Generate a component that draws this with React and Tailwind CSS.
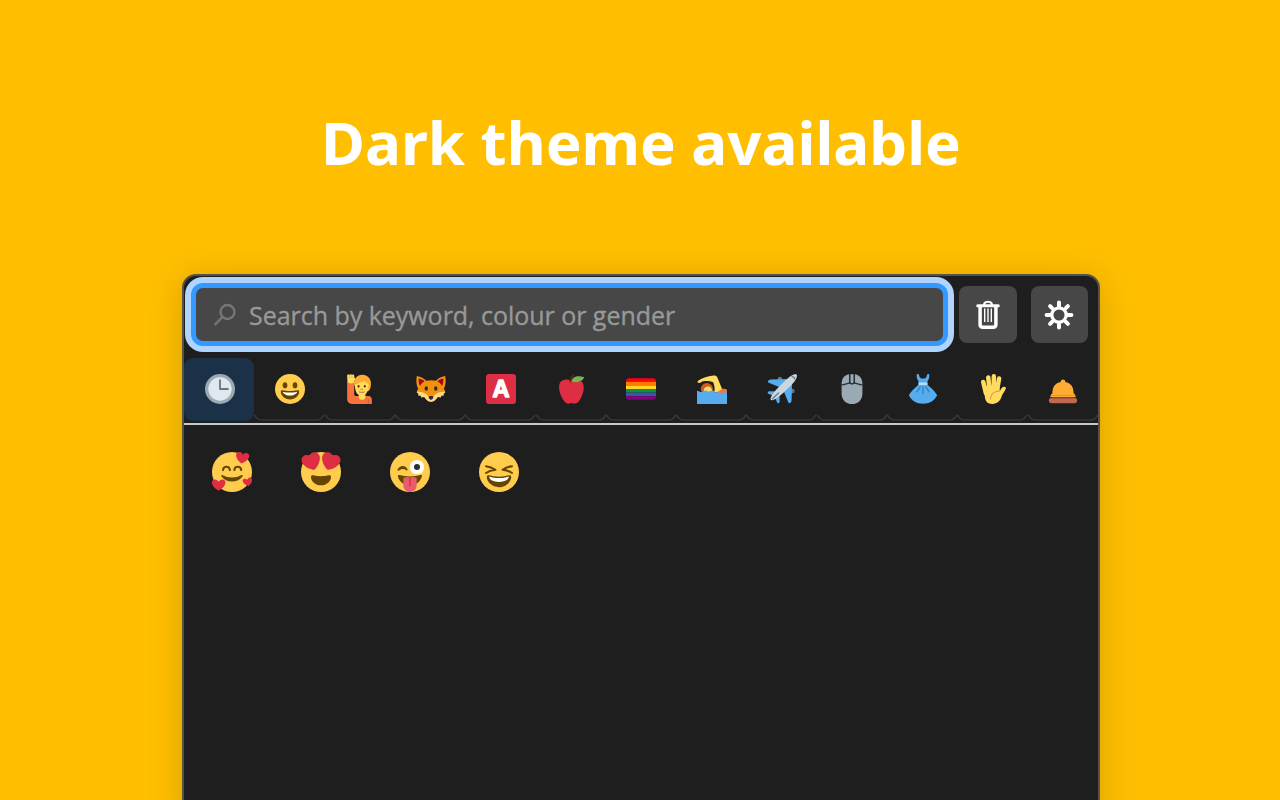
import React from 'react';

const Emoji = ({ size = 'w-[30px] h-[30px]', children }) => (
  <svg viewBox="0 0 36 36" className={`${size} block shrink-0`} fill="none">{children}</svg>
);

const Face = () => <circle cx="18" cy="18" r="18" fill="#FFCC4D" />;
const Heart = ({ t }) => (
  <path transform={t} fill="#DD2E44" d="M0 10C-4.500 7.500-6.500 4.500-6 1.700-5.500-.8-2-1.300 0 1.700 2-1.300 5.500-.8 6 1.700 6.500 4.500 4.500 7.500 0 10z" />
);

const Clock = () => (
  <Emoji>
    <circle cx="18" cy="18" r="18" fill="#99AAB5" />
    <circle cx="18" cy="18" r="14" fill="#E1E8ED" />
    <path d="M18 7.500V18h9.500" stroke="#66757F" strokeWidth="2.200" strokeLinecap="round" strokeLinejoin="round" />
  </Emoji>
);
const Grin = () => (
  <Emoji>
    <Face />
    <ellipse cx="12" cy="13.500" rx="2.800" ry="3.700" fill="#664500" />
    <ellipse cx="24" cy="13.500" rx="2.800" ry="3.700" fill="#664500" />
    <path fill="#664500" d="M18 20.500c-3.623 0-6.027-.422-9-1-.679-.131-2 0-2 2 0 4 4.595 9 11 9 6.404 0 11-5 11-9 0-2-1.321-2.132-2-2-2.973.578-5.377 1-9 1z" />
    <path fill="#FFF" d="M9 21.200s3 1 9 1 9-1 9-1-2 4.600-9 4.600-9-4.600-9-4.600z" />
  </Emoji>
);
const Person = () => (
  <Emoji>
    <path fill="#F4743B" d="M2.600 9.500h8.400V24c0 1.800.8 2.500 2.500 2.500h3l4 2.500 4-2.500H28c2.800 0 4.200 1.600 4.200 4.500V36H8.500C4.800 36 2.600 33.500 2.600 29.500z" />
    <path fill="#FFDC5D" d="M16.500 22h8v5.500c0 2-1.500 3.500-4 3.500s-4-1.500-4-3.500z" />
    <path fill="#FFDC5D" d="M2.500 2C2.500.6 4.400.3 5.200 1 6 .2 7.800.2 8.400 1c.7-.6 2.500-.4 2.700 1l.2 2.500c1.500.2 1.400 2 .5 3L10.500 10.500c-2 1.300-6 1-7.500-.5z" />
    <path stroke="#EF9645" strokeWidth=".7" d="M5.200 1.200v3.600M8.300 1.200v3.600" />
    <path fill="#FFAC33" d="M11 13C10 6.500 14 .8 21 .8S32.300 7 31 14c-.4 3-1.400 5-2.600 6.300L13 18z" />
    <path fill="#FFDC5D" d="M12 12.500c3-.5 4.500-2.200 7-2.700 2-.4 3.500-.8 4.500-1.500 1 2 2.500 3 4.800 3.400.6 7.300-1.800 14-8.300 14-5.500 0-8.300-4.700-8-13.200z" />
    <ellipse cx="16.300" cy="14.800" rx="1.200" ry="1.500" fill="#662113" />
    <ellipse cx="23.800" cy="14.800" rx="1.200" ry="1.500" fill="#662113" />
    <path stroke="#C1694F" strokeLinecap="round" strokeWidth="1.200" d="M19.200 18.300h1.800M17.200 21.600q3 1.200 6 0" />
    <path stroke="#BD4B27" strokeWidth=".8" d="M28 30.500V36" />
  </Emoji>
);
const Fox = () => (
  <Emoji>
    <path fill="#F4900C" d="M1 2.500C-.2 8.500.5 14 2.600 17.500c-.9 1.700-1.500 3-1.900 4.500L14 30h8l13.300-8c-.4-1.500-1-2.800-1.900-4.500C35.500 14 36.200 8.500 35 2.500c-4.800.8-9 3-11.300 5.700-3.700-1-7.700-1-11.400 0C10 5.500 5.800 3.300 1 2.500z" />
    <path fill="#A0041E" d="M3.300 5.300c-.3 3.900.3 7 1.600 9.200 1-2.500 3-4.500 5.400-5.800C8.500 7 6.300 5.900 3.300 5.300zM32.700 5.300c.3 3.900-.3 7-1.600 9.200-1-2.500-3-4.500-5.400-5.800 1.800-1.700 4-2.800 7-3.400z" />
    <path fill="#FFD983" d="M.7 21.500c4-.8 8 .3 10.800 2.300 1.800 1.300 2.700 2.600 4 3.500h5c1.300-.9 2.200-2.200 4-3.500 2.800-2 6.800-3.100 10.800-2.300l-2.100 2.300.3 2-3 .4-.8 1.900-3.500-.4c-2.500 3.300-4.200 5.800-8.200 5.800S12.300 31 9.800 27.700l-3.500.4-.8-1.900-3-.4.3-2z" />
    <path fill="#292F33" d="M15.200 27c1.400-.8 4.200-.8 5.600 0 .2 2-1.300 3.800-2.800 3.800S15 29 15.200 27z" />
    <ellipse cx="12.300" cy="17.500" rx="2" ry="2.700" fill="#292F33" />
    <ellipse cx="23.700" cy="17.500" rx="2" ry="2.700" fill="#292F33" />
  </Emoji>
);
const LetterA = () => (
  <Emoji>
    <rect width="36" height="36" rx="4" fill="#DD2E44" />
    <text x="18" y="28" textAnchor="middle" fontSize="28" fontWeight="600" fill="#FFF" stroke="#FFF" strokeWidth="1.700" strokeLinejoin="round" className="font-['Inter',sans-serif]">A</text>
  </Emoji>
);
const Apple = () => (
  <Emoji>
    <path fill="#DD2E44" d="M18.500 8.500C14 5.500 8 6 5.200 10 2 15 4.300 24 8 30c3 5 5.500 6.500 9.700 5 .6-.2 1.200-.2 1.800 0 4.500 1.500 7.300-.5 9.800-5C33 23 34.800 15 31.700 10.300 28.500 6 23 5.500 18.500 8.500z" />
    <path stroke="#662113" strokeWidth="2.400" strokeLinecap="round" d="M17.500 9C17.500 6 18.800 3.500 20.500 1.800" />
    <path fill="#77B255" d="M18.500 9c1-6 8-8 15.500-5C32 9 25 11 18.500 9z" />
  </Emoji>
);
const Flag = () => (
  <Emoji>
    <path fill="#FF000E" d="M4 5h28a4 4 0 0 1 4 4v.4H0V9a4 4 0 0 1 4-4z" />
    <path fill="#FF7A00" d="M0 9.400h36v4.300H0z" />
    <path fill="#FFD91A" d="M0 13.700h36V18H0z" />
    <path fill="#128B49" d="M0 18h36v4.300H0z" />
    <path fill="#3558A0" d="M0 22.300h36v4.400H0z" />
    <path fill="#880082" d="M0 26.700h36v.3a4 4 0 0 1-4 4H4a4 4 0 0 1-4-4z" />
  </Emoji>
);
const Swim = () => (
  <Emoji>
    <circle cx="11.800" cy="18" r="7.300" fill="#D25B20" />
    <circle cx="13" cy="20" r="5" fill="#FFDC5D" />
    <path fill="#FFDC5D" d="M1.300 8C5.300 4.800 12 2.500 20 1.700c2-.2 3.500.5 4.300 2.300L29.500 16.500 31 22H20.500c1.200-3.500.8-8-1.300-12.500C13 8 8 8.300 5 9.800c-1 .8-3.200 1.500-4.100.4-.4-.9-.1-1.600.4-2.200z" />
    <path fill="#F4743B" d="M24 21.500c2.500-.8 5-2.500 6.500-4.100 2.300.3 4.300.9 5.500 1.300v5H24z" />
    <path fill="#55ACEE" d="M0 20c2.500 0 3.500 1.700 5 1.700 2.500 0 3-2 5-2s2.800 1.300 4.500 1.300 2.500-1.500 4.500-1.100c2 .3 2.500 2.300 5 2.300s4 .5 7 .3c2 0 3.500-.8 5-1.300V36H0z" />
  </Emoji>
);
const Plane = () => (
  <Emoji>
    <circle cx="15.500" cy="6" r="2.700" fill="#66757F" />
    <circle cx="30.500" cy="20.500" r="2.700" fill="#66757F" />
    <path fill="#55ACEE" d="M1.200 9c.3-1.500 1.500-2.500 3.500-2.500L25 6l-9.500 10L2 10.500c-.8-.4-1-.8-.8-1.500zM27 35c1.500-.3 2.500-1.500 2.500-3.500L30 11l-10 9.500 5.500 13.500c.4.8.8 1.100 1.500 1zM.8 22.500c.4-1.400 1.800-1.900 3.200-1.700l8.500.2-4 5.500-7-2.700c-.5-.3-.8-.7-.7-1.300zM13.500 35.200c1.400-.4 1.900-1.800 1.700-3.200L15 23.500l-5.500 4 2.700 7c.3.500.7.800 1.300.7z" />
    <path fill="#CCD6DD" d="M28 2.800C31.500.2 34.500-.2 35.600.6c.8 1.200.2 4.200-2.200 7.700C30 13 17 25.500 11 29.500 8 31.500 5.500 32 4.600 31.200c-.7-1-.3-3.500 1.700-6.400C10.500 19 23 6.500 28 2.800z" />
    <path stroke="#66757F" strokeWidth="1.500" strokeLinecap="round" d="M30 3c2 0 3 1 3.200 3M6.500 29.700l7.500-7" />
  </Emoji>
);
const Mouse = () => (
  <Emoji>
    <path fill="#99AAB5" d="M5.500 12C5.500 4 10 0 18 0s12.500 4 12.500 12v11C30.500 31 25.500 36 18 36S5.500 31 5.500 23z" />
    <path stroke="#292F33" strokeWidth="1.500" d="M5.500 13c3.500.5 6-2.500 12.500-2.500S27 13.500 30.500 13" />
    <rect x="14.400" y="-1" width="7.200" height="13.500" rx="2.500" fill="#292F33" />
    <rect x="16.200" y="0" width="3.600" height="11" rx="1.700" fill="#99AAB5" />
  </Emoji>
);
const Dress = () => (
  <Emoji>
    <path fill="#55ACEE" d="M10.500.5c.7-.6 2.300-.5 2.700.3C13.500 4 15 5.500 18 5.500S22.500 4 22.800.8c.4-.8 2-.9 2.700-.3.5 3.500-.5 6-2.200 8.500V13C28 17 32.500 21 35 25.500c-3 6-9 10.200-17 10.200S4 31.500 1 25.500C3.500 21 8 17 12.700 13V9C11 6.500 10 4 10.500.5z" />
    <path fill="#BBDDF5" d="M12.700 10.300h10.600v2.900H12.700z" />
    <path stroke="#2B7BB9" strokeWidth="1.300" strokeLinecap="round" d="M18 15v8.500M14.700 15.500l-4 6M21.300 15.500l4 6" />
  </Emoji>
);
const Hand = () => (
  <Emoji>
    <path stroke="#FFDC5D" strokeWidth="5.400" strokeLinecap="round" d="M6.300 9.500L9.500 23M12.300 4.300L14 20M19 2.700l-.2 17M25.300 5.500L22.700 20" />
    <path fill="#FFDC5D" d="M7 18V14.500l18.500-1 .5 7c1-1.500 2-3.500 3.500-4.700 1.700-1.300 4.200-.5 4 1.500-1 3-3.700 5.700-5 9.200C27 32 23.500 36 17 36c-5 0-8.200-3-8.700-8z" />
    <path stroke="#EF9645" strokeWidth="1.500" strokeLinecap="round" d="M25.500 20.500c-6 .2-10.500 3.500-10.500 9.500" />
  </Emoji>
);
const Bell = () => (
  <Emoji>
    <circle cx="18" cy="9.300" r="2.800" fill="#FFAC33" />
    <path fill="#FFAC33" d="M18 9.200c4 0 6.500.9 9 3.300s3.500 5 3.800 11c1.600.8 2.400 2.200 2.400 4.500H2.800c0-2.300.7-3.700 2.400-4.500.3-6 1.300-8.600 3.800-11s5-3.300 9-3.300z" />
    <path stroke="#F4900C" strokeWidth="1.200" strokeLinecap="round" d="M4.500 25.700h27" />
    <rect x="1" y="28.800" width="34" height="6.200" rx="2.800" fill="#BF6952" />
    <path fill="#8A4B38" d="M5 28h26v1.300H5z" />
  </Emoji>
);

const BIG = 'w-[40px] h-[40px]';
const Loved = () => (
  <Emoji size={BIG}>
    <Face />
    <path stroke="#664500" strokeWidth="1.800" strokeLinecap="round" d="M9.900 16.300c.5-4 5.700-4 6.200 0M20.100 16.300c.5-4 5.700-4 6.200 0" />
    <path fill="#664500" d="M9.300 20.800c5 3 12.400 3 17.400 0 .8-.3 1.200.3.8 1C25.500 24.900 22 26.500 18 26.500s-7.500-1.600-9.500-4.700c-.4-.7 0-1.300.8-1z" />
    <Heart t="translate(28 .7) rotate(10) scale(.97)" />
    <Heart t="translate(6 25) scale(1 .98)" />
    <Heart t="translate(31.500 23.800) rotate(-12) scale(.7)" />
  </Emoji>
);
const HeartEyes = () => (
  <Emoji size={BIG}>
    <Face />
    <path fill="#DD2E44" d="M16.650 3.281C15.791.85 13.126-.426 10.694.431c-1.476.52-2.521 1.711-2.928 3.104-1.191-.829-2.751-1.100-4.225-.58C1.111 3.813-.167 6.480.692 8.911c.122.344.284.663.472.958 1.951 3.582 7.588 6.100 11.001 6.131 2.637-2.167 5.446-7.665 4.718-11.677-.038-.348-.113-.698-.233-1.042zM19.350 3.281c.859-2.431 3.525-3.707 5.956-2.850 1.476.52 2.521 1.711 2.929 3.104 1.191-.829 2.751-1.100 4.225-.58 2.430.858 3.707 3.525 2.850 5.956-.123.344-.284.663-.473.958-1.951 3.582-7.588 6.100-11.002 6.131-2.637-2.167-5.445-7.665-4.717-11.677.037-.348.112-.698.232-1.042z" />
    <path fill="#664500" d="M18 21.849c-2.966 0-4.935-.346-7.369-.819-.557-.106-1.638 0-1.638 1.638 0 3.275 3.763 7.369 9.007 7.369s9.007-4.094 9.007-7.369c0-1.638-1.082-1.745-1.638-1.638-2.434.473-4.402.819-7.369.819" />
  </Emoji>
);
const WinkTongue = () => (
  <Emoji size={BIG}>
    <Face />
    <path fill="#664500" d="M7 21.500c0-.8.700-1 1.500-.7 5.500 1.700 13.500 1.700 19 0 .8-.3 1.500-.1 1.300.7C27.500 26.500 23.500 30 18 30S8 26.500 7 21.500z" />
    <path fill="#EA596E" d="M12 23.300c2-1 4.200-1 6-.3 1.800-.7 4-.7 6 .3v6.700c0 3.500-2.500 5.900-6 5.900s-6-2.400-6-5.900z" />
    <path stroke="#DD2E44" strokeWidth="1.300" strokeLinecap="round" d="M18 23.500v7" />
    <circle cx="24.300" cy="13.600" r="6.500" fill="#FFF" />
    <circle cx="24.300" cy="13.600" r="2.700" fill="#292F33" />
    <path fill="#664500" d="M6.800 16C8 12.800 13 10.500 15.800 15.500c.3 1-.7 1.500-1.400.8C12.500 14.800 10 14.900 8 16.700c-.7.5-1.500.1-1.200-.7z" />
  </Emoji>
);
const Laugh = () => (
  <Emoji size={BIG}>
    <Face />
    <path stroke="#664500" strokeWidth="1.800" strokeLinecap="round" strokeLinejoin="round" d="M6.300 12.800c3 .4 6 1.500 8.500 3.200-3 .2-6 1.200-8.500 2.900M29.700 12.800c-3 .4-6 1.500-8.500 3.200 3 .2 6 1.200 8.500 2.900" />
    <path fill="#664500" d="M18 22.200c-3.600 0-6-.4-9-1.200-.8-.2-2-.1-2 1.600 0 4 4.600 9.100 11 9.100s11-5.100 11-9.100c0-1.700-1.200-1.800-2-1.600-3 .8-5.400 1.200-9 1.200z" />
    <path fill="#FFF" d="M9.200 22.100c3 1.200 5.800 1.400 8.800 1.400s5.800-.2 8.800-1.400c0 3-4 4.900-8.800 4.900s-8.800-1.900-8.800-4.900z" />
  </Emoji>
);

const tabs = [Clock, Grin, Person, Fox, LetterA, Apple, Flag, Swim, Plane, Mouse, Dress, Hand, Bell];
const recents = [Loved, HeartEyes, WinkTongue, Laugh];

// Rounded lower edge of an idle tab, curling up at both sides
const TabEdge = () => (
  <svg viewBox="0 0 70 8" preserveAspectRatio="none" className="w-full h-2 block shrink-0" fill="none" stroke="#363636" strokeWidth="1.700">
    <path d="M.3 1.500C1.800 5 4 7 8 7H62C66 7 68.200 5 69.700 1.500" />
  </svg>
);

const SearchIcon = () => (
  <svg viewBox="0 0 24 24" className="-ml-px w-6 h-6 shrink-0" fill="none" stroke="#757575" strokeWidth="2.400" strokeLinecap="round">
    <circle cx="15.500" cy="9" r="7" />
    <path d="M10.300 14.200L3.300 21.300" />
  </svg>
);
const TrashIcon = () => (
  <svg viewBox="0 0 24 30" className="w-6 h-[30px]" fill="none" stroke="#FFF" strokeLinecap="round">
    <path strokeWidth="3" d="M1.700 5.800h20.600" />
    <path strokeWidth="2" d="M8 4.500C8.500.9 15.500.9 16 4.500" />
    <path strokeWidth="3.500" strokeLinejoin="round" d="M4.100 7v17.500c0 1.700 1 2.700 2.700 2.700h10.400c1.700 0 2.700-1 2.700-2.700V7" />
    <path strokeWidth="1.400" strokeLinecap="butt" d="M8.700 8.500v13.500M12 8.500v13.500M15.300 8.500v13.500" />
  </svg>
);
const GearIcon = () => (
  <svg viewBox="-15 -15 30 30" className="w-[30px] h-[30px]" fill="none" stroke="#FFF" strokeLinecap="round">
    <circle r="7.200" strokeWidth="3.300" />
    <path strokeWidth="4" d="M0-12.400V-9M0 12.400V9M-12.400 0H-9M12.400 0H9M-8.900-8.900l2 2M8.900 8.900l-2-2M-8.900 8.900l2-2M8.900-8.900l-2 2" />
  </svg>
);

export default function App() {
  return (
    <div className="w-full h-[800px] overflow-hidden bg-[#ffbf00] flex flex-col items-center font-['Open_Sans',sans-serif]">
      <h1 className="mt-[101px] ml-[2px] h-[82px] leading-[82px] text-[60px] font-bold text-white whitespace-nowrap font-['Noto_Sans','Open_Sans',sans-serif]">Dark theme available</h1>
      <main className="mt-[91px] ml-[2px] w-[918px] h-[560px] shrink-0 rounded-[14px] border-2 border-[#55524e] bg-[#1e1e1e] overflow-hidden shadow-[0_4px_36px_rgba(0,0,0,0.16)]">
        <div className="flex pl-px pt-px">
          <div className="w-[769px] h-[75px] rounded-[18px] bg-[#aed4ff] p-[6px]">
            <div className="h-full rounded-[12px] bg-[#3398ff] p-[5px]">
              <label className="h-full rounded-[7px] bg-[#474747] flex items-center pl-[17px] gap-[13px]">
                <SearchIcon />
                <input className="flex-1 h-full bg-transparent outline-none text-[25px] tracking-[-0.03px] placeholder:text-[#999999] [-webkit-text-stroke:0.35px_#999999]" placeholder="Search by keyword, colour or gender" />
              </label>
            </div>
          </div>
          <button className="ml-[5px] mt-[9px] w-[58px] h-[57px] rounded-lg bg-[#474747] flex items-center justify-center"><TrashIcon /></button>
          <button className="ml-[13.500px] mt-[9px] w-[57.500px] h-[57px] rounded-lg bg-[#474747] flex items-center justify-center"><GearIcon /></button>
        </div>
        <nav className="mt-[6px] h-[67px] grid grid-cols-[repeat(13,minmax(0,1fr))] items-start border-b-2 border-[#c8c8c8]">
          {tabs.map((Icon, i) => (
            <button key={i} className={i === 0 ? 'h-[63px] rounded-[9px] bg-[#1b3148] flex justify-center pt-4 pl-px' : 'h-[63px] flex flex-col items-center justify-between pt-4'}>
              <span className={i === 0 ? 'block' : 'block pl-px'}><Icon /></span>
              {i > 0 && <TabEdge />}
            </button>
          ))}
        </nav>
        <section className="flex gap-[49px] pl-[28px] pt-[27px]">
          {recents.map((Icon, i) => <Icon key={i} />)}
        </section>
      </main>
    </div>
  );
}
